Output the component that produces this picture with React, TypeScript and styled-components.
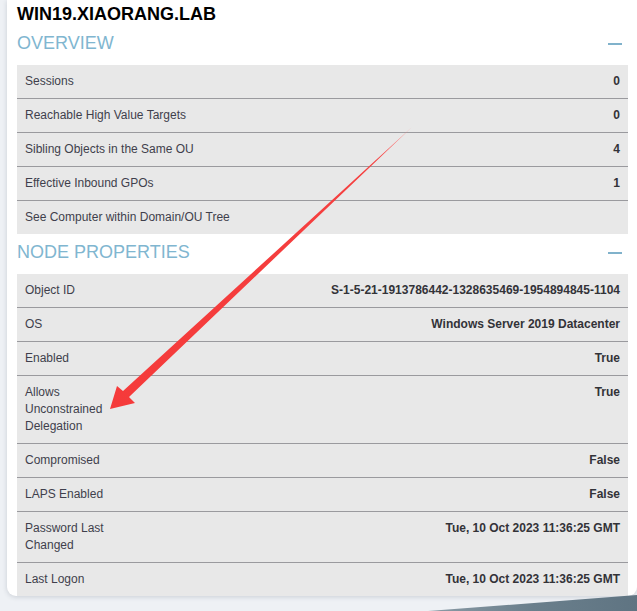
import React from 'react';
import styled, { createGlobalStyle } from 'styled-components';

const GlobalStyle = createGlobalStyle`
  html, body {
    margin: 0;
    padding: 0;
    background: #eef1f5;
    font-family: 'Liberation Sans', Arial, sans-serif;
  }
`;

const Page = styled.div`
  position: relative;
  width: 637px;
  height: 611px;
  overflow: hidden;
`;

const Card = styled.div`
  margin-left: 7px;
  width: 630px;
  box-sizing: border-box;
  padding: 4px 9px 0 10px;
  background: #ffffff;
  border-radius: 0 0 9px 9px;
  box-shadow: 0 1px 5px rgba(40, 50, 70, 0.18);
  overflow: hidden;
`;

const Title = styled.h1`
  margin: 0;
  font-size: 18px;
  line-height: 21px;
  font-weight: 700;
  color: #000;
`;

const SectionHeader = styled.div`
  display: flex;
  align-items: center;
  justify-content: space-between;
  padding: 6px 6px 10px 0;
`;

const SectionTitle = styled.h2`
  margin: 0;
  font-size: 18px;
  line-height: 24px;
  font-weight: 400;
  color: #80b6d0;
`;

const Collapse = styled.span`
  display: block;
  width: 14px;
  height: 2px;
  margin-top: 1px;
  background: #80b2cb;
`;

const Rows = styled.div`
  display: flex;
  flex-direction: column;
`;

const Row = styled.div<{ $cols: string }>`
  display: grid;
  grid-template-columns: ${(p) => p.$cols};
  align-items: start;
  padding: 8px;
  background: #e8e8e8;
  font-size: 12px;
  line-height: 17px;
  border-bottom: 1px solid #9a9a9e;

  &:last-child {
    border-bottom: none;
  }
`;

const Label = styled.span`
  color: #3f3f4c;
`;

const Value = styled.span`
  text-align: right;
  font-weight: 700;
  color: #333338;
  white-space: nowrap;
`;

const Overlay = styled.svg`
  position: absolute;
  left: 0;
  top: 0;
  pointer-events: none;
`;

type Prop = [string, string];

const overview: Prop[] = [
  ['Sessions', '0'],
  ['Reachable High Value Targets', '0'],
  ['Sibling Objects in the Same OU', '4'],
  ['Effective Inbound GPOs', '1'],
  ['See Computer within Domain/OU Tree', ''],
];

const nodeProps: Prop[] = [
  ['Object ID', 'S-1-5-21-1913786442-1328635469-1954894845-1104'],
  ['OS', 'Windows Server 2019 Datacenter'],
  ['Enabled', 'True'],
  ['Allows Unconstrained Delegation', 'True'],
  ['Compromised', 'False'],
  ['LAPS Enabled', 'False'],
  ['Password Last Changed', 'Tue, 10 Oct 2023 11:36:25 GMT'],
  ['Last Logon', 'Tue, 10 Oct 2023 11:36:25 GMT'],
];

const Section = ({ title, items, cols }: { title: string; items: Prop[]; cols: string }) => (
  <>
    <SectionHeader>
      <SectionTitle>{title}</SectionTitle>
      <Collapse />
    </SectionHeader>
    <Rows>
      {items.map(([label, value]) => (
        <Row key={label} $cols={cols}>
          <Label>{label}</Label>
          <Value>{value}</Value>
        </Row>
      ))}
    </Rows>
  </>
);

export default function App() {
  return (
    <Page>
      <GlobalStyle />
      <Card>
        <Title>WIN19.XIAORANG.LAB</Title>
        <Section title="OVERVIEW" items={overview} cols="1fr auto" />
        <Section title="NODE PROPERTIES" items={nodeProps} cols="100px 1fr" />
      </Card>

      {/* dark edge peeking out below the card */}
      <Overlay width="637" height="611" viewBox="0 0 637 611">
        <defs>
          <linearGradient id="edge" x1="0" x2="1" y1="0" y2="0">
            <stop offset="0" stopColor="#8b9ba6" />
            <stop offset="0.5" stopColor="#6a7f8c" />
            <stop offset="1" stopColor="#5f7482" />
          </linearGradient>
          <linearGradient id="shaft" x1="1" x2="0" y1="0" y2="1">
            <stop offset="0" stopColor="#ff8c8c" />
            <stop offset="0.12" stopColor="#f54040" />
            <stop offset="1" stopColor="#f53a3a" />
          </linearGradient>
        </defs>
        <polygon points="428,611 637,595 637,611" fill="url(#edge)" />
        {/* annotation arrow */}
        <polygon
          points="412,127 129,397 135,403 110,409 117,386 123,391"
          fill="url(#shaft)"
        />
      </Overlay>
    </Page>
  );
}
